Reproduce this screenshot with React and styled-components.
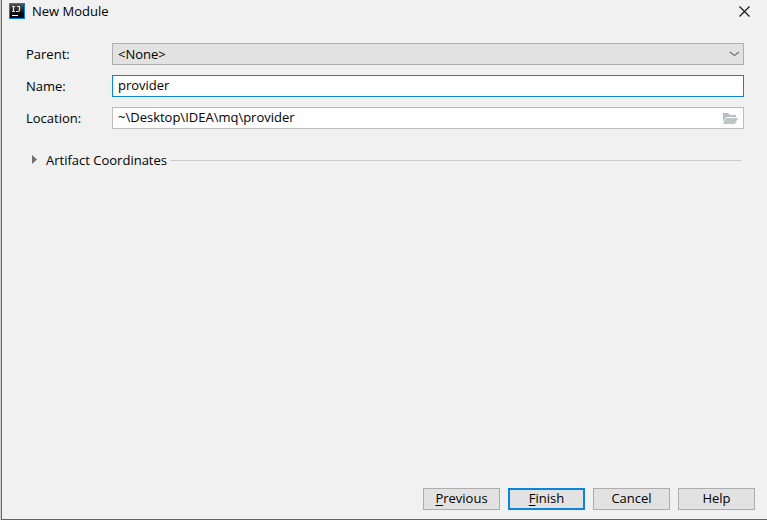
import React, { useState } from "react";
import styled, { createGlobalStyle } from "styled-components";

const GlobalStyle = createGlobalStyle`
  * { box-sizing: border-box; }
  body { margin: 0; background: #d0d0d0; }
  body, button, input, select {
    font-family: "Open Sans", "Noto Sans", sans-serif;
    font-size: 13px;
    line-height: 18px;
    color: #000;
  }
`;

const Dialog = styled.form`
  display: flex;
  flex-direction: column;
  min-height: 100vh;
  background: #f1f1f1;
  border-left: 1px solid #686868;
  border-bottom: 1px solid #626262;
  margin-left: 1px;
`;

const TitleBar = styled.header`
  display: flex;
  align-items: center;
  gap: 7px;
  height: 22px;
  padding: 0 17px 0 7px;
`;

const Title = styled.h1`
  flex: 1;
  margin: 0;
  font-size: 13px;
  line-height: 18px;
  font-weight: 400;
`;

const CloseButton = styled.button`
  display: flex;
  padding: 0;
  border: 0;
  background: none;
`;

const Fields = styled.div`
  display: grid;
  grid-template-columns: 86px 1fr;
  row-gap: 10px;
  align-items: center;
  padding: 21px 23px 0 24px;
`;

const Label = styled.label`
  line-height: 22px;
`;

const Control = styled.div`
  display: flex;
  align-items: center;
  height: 22px;
  padding-right: ${(p) => (p.$tone === "select" ? 3 : 5)}px;
  background: ${(p) => (p.$tone === "select" ? "#e2e2e2" : "#fff")};
  border: 1px solid
    ${(p) => ({ select: "#adadad", active: "#0a84dc", plain: "#bcbcbc" })[p.$tone]};
`;

const TextInput = styled.input`
  flex: 1;
  min-width: 0;
  height: 20px;
  padding: 0 5px 2px;
  border: 0;
  outline: 0;
  background: transparent;
`;

const Select = styled.select`
  flex: 1;
  min-width: 0;
  height: 20px;
  padding: 0 5px;
  border: 0;
  outline: 0;
  appearance: none;
  background: transparent;
`;

const IconButton = styled.button`
  display: flex;
  padding: 0;
  border: 0;
  background: none;
`;

const Section = styled.div`
  display: flex;
  align-items: center;
  gap: 4px;
  padding: 22px 26px 0 29px;
`;

const SectionToggle = styled.button`
  display: flex;
  align-items: center;
  gap: 7px;
  padding: 0;
  border: 0;
  background: none;
`;

const Rule = styled.hr`
  flex: 1;
  margin: 0;
  border: 0;
  border-top: 1px solid #cbcbcb;
`;

const Footer = styled.footer`
  display: flex;
  justify-content: flex-end;
  gap: 8px;
  margin-top: auto;
  padding: 0 12px 9px;
`;

const Button = styled.button`
  width: 77px;
  height: 22px;
  padding: 0 0 2px;
  line-height: 16px;
  background: #e2e2e2;
  border: ${(p) => (p.$primary ? "2px solid #0a84dc" : "1px solid #adadad")};
`;

const Mnemonic = styled.span`
  text-decoration: underline;
  text-underline-offset: 2px;
`;

function AppIcon() {
  return (
    <svg width="16" height="16" viewBox="0 0 16 16" aria-hidden="true">
      <defs>
        <linearGradient id="tile" x1="0" y1="0" x2="0" y2="1">
          <stop offset="0" stopColor="#555" />
          <stop offset="0.7" stopColor="#080808" />
        </linearGradient>
      </defs>
      <rect x="0.5" y="0.5" width="15" height="15" fill="url(#tile)" stroke="#087cf0" />
      <path d="M3 3.5h3M4.5 3v5M3 8.5h3M8 3.5h3M10.5 3v4q0 1.5-1.5 1.5H7" fill="none" stroke="#e8e8e8" strokeWidth="1.2" />
      <path d="M3 12.5h6" stroke="#fff" />
    </svg>
  );
}

function CloseIcon() {
  return (
    <svg width="11" height="11" viewBox="0 0 11 11" aria-hidden="true">
      <path d="M0.5 0.5l10 10M10.5 0.5l-10 10" stroke="#111" strokeWidth="1.1" />
    </svg>
  );
}

function ChevronIcon() {
  return (
    <svg width="11" height="6" viewBox="0 0 11 6" aria-hidden="true">
      <path d="M1 1l4.5 3.5L10 1" fill="none" stroke="#777" strokeWidth="1.3" />
    </svg>
  );
}

function FolderIcon() {
  return (
    <svg width="16" height="12" viewBox="0 0 16 12" aria-hidden="true">
      <path d="M1 1h5l2 2h6v2H4L1 10z" fill="#b7bcbf" />
      <path d="M4 6h12l-3 6H1z" fill="#bfc4c7" />
    </svg>
  );
}

function TriangleIcon({ open }) {
  return (
    <svg width="8" height="10" viewBox="0 0 8 10" aria-hidden="true">
      <path d={open ? "M0 2h8L4 7z" : "M1 0v9l5-4.5z"} fill="#707070" />
    </svg>
  );
}

export default function App() {
  const [name, setName] = useState("provider");
  const [location, setLocation] = useState("~\\Desktop\\IDEA\\mq\\provider");
  const [open, setOpen] = useState(false);

  return (
    <>
      <GlobalStyle />
      <Dialog onSubmit={(e) => e.preventDefault()}>
        <TitleBar>
          <AppIcon />
          <Title>New Module</Title>
          <CloseButton type="button" aria-label="Close">
            <CloseIcon />
          </CloseButton>
        </TitleBar>
        <Fields>
          <Label htmlFor="parent">Parent:</Label>
          <Control $tone="select">
            <Select id="parent">
              <option>&lt;None&gt;</option>
            </Select>
            <ChevronIcon />
          </Control>
          <Label htmlFor="name">Name:</Label>
          <Control $tone="active">
            <TextInput id="name" value={name} onChange={(e) => setName(e.target.value)} />
          </Control>
          <Label htmlFor="location">Location:</Label>
          <Control $tone="plain">
            <TextInput id="location" value={location} onChange={(e) => setLocation(e.target.value)} />
            <IconButton type="button" aria-label="Browse">
              <FolderIcon />
            </IconButton>
          </Control>
        </Fields>
        <Section>
          <SectionToggle type="button" aria-expanded={open} onClick={() => setOpen(!open)}>
            <TriangleIcon open={open} />
            Artifact Coordinates
          </SectionToggle>
          <Rule />
        </Section>
        <Footer>
          <Button type="button"><Mnemonic>P</Mnemonic>revious</Button>
          <Button type="submit" $primary><Mnemonic>F</Mnemonic>inish</Button>
          <Button type="button">Cancel</Button>
          <Button type="button">Help</Button>
        </Footer>
      </Dialog>
    </>
  );
}
